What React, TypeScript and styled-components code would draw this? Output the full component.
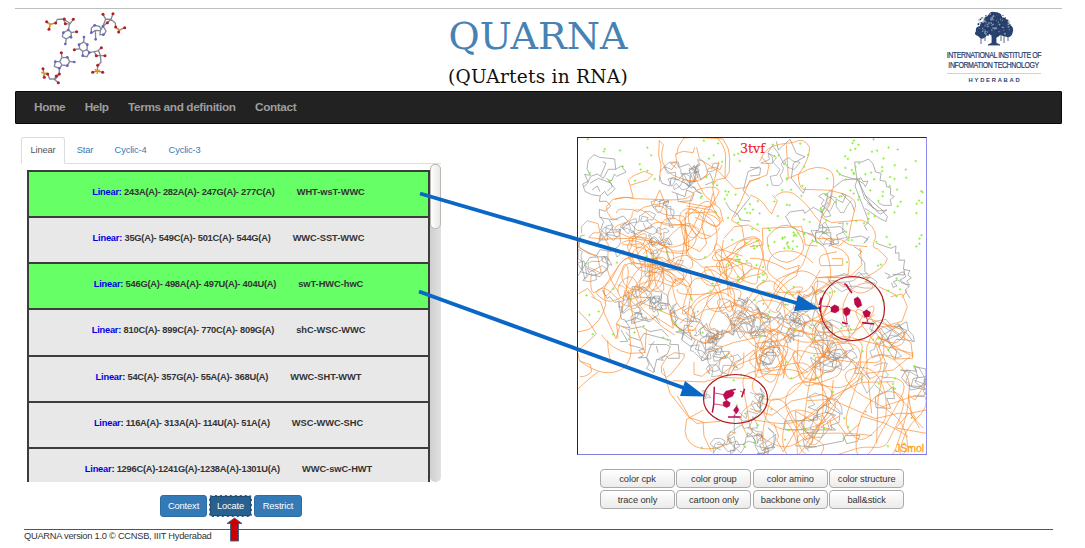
import React from "react";
import styled, { createGlobalStyle } from "styled-components";

const Global = createGlobalStyle`
  *{box-sizing:border-box}
  body{margin:0;background:#fff;font-family:"Liberation Sans",Arial,sans-serif;color:#333;overflow:hidden}
  button{font-family:inherit;margin:0;padding:0}
`;

/* ---------- layout ---------- */
const Page = styled.div`position:relative;width:1085px;height:548px;padding:8px 23px 0 15px;`;
const Header = styled.header`height:83px;border-top:1px solid #bdbdbd;display:grid;grid-template-columns:373px 300px 1fr;`;
const LogoSlot = styled.div`padding:2px 0 0 25px;`;
const TitleBlock = styled.div`display:flex;flex-direction:column;align-items:center;font-family:"DejaVu Serif",serif;`;
const Title = styled.h1`margin:4px 0 0;font-size:38px;line-height:46px;font-weight:400;color:#4682b4;`;
const Subtitle = styled.div`font-size:18.6px;line-height:24px;margin-top:6px;color:#111;white-space:nowrap;letter-spacing:.22px;`;
const Institute = styled.div`justify-self:end;width:136px;padding:2px 0 0;display:flex;flex-direction:column;align-items:center;color:#263f70;white-space:nowrap;`;
const InstLine = styled.div`font-size:8.2px;line-height:10px;letter-spacing:-.5px;-webkit-text-stroke:.2px #263f70;transform:scaleX(.86);&:nth-of-type(1){margin-top:4px;}`;
const InstCity = styled.div`width:94px;margin-top:2px;padding:2px 0 0 2px;border-top:1px solid #cfd5cb;font-size:5.8px;font-weight:700;line-height:9px;letter-spacing:1.75px;text-align:center;`;
const Nav = styled.nav`height:33px;background:#222;border:1px solid #080808;border-radius:1px;display:flex;align-items:center;padding:0 0 1px 18px;gap:19.4px;`;
const NavLink = styled.a`color:#9d9d9d;font-weight:700;font-size:11.8px;line-height:16px;letter-spacing:-.38px;`;
const Main = styled.main`display:flex;height:405px;padding-top:13px;`;
const Left = styled.section`flex:none;width:426px;margin-left:5px;`;
const Tabs = styled.div`width:420px;height:27px;margin-left:1px;border-bottom:1px solid #ddd;display:flex;`;
const Tab = styled.a<{ $active?: boolean; $w: number }>`
  width:${p => p.$w}px;height:27px;display:flex;align-items:center;justify-content:center;padding-bottom:1px;
  font-size:9.3px;letter-spacing:-.16px;color:${p => (p.$active ? "#555" : "#337ab7")};
  border:1px solid ${p => (p.$active ? "#ddd" : "transparent")};border-bottom-color:${p => (p.$active ? "#fff" : "transparent")};
  border-radius:3px 3px 0 0;`;
const Scroller = styled.div`display:flex;height:318px;width:421px;overflow:hidden;`;
const Rows = styled.div`width:403px;margin:6px 0 0 7px;border:2px solid #3a3d3a;border-bottom:0;height:312px;overflow:hidden;`;
const Row = styled.div<{ $on?: boolean }>`
  height:46.15px;border-bottom:2px solid #3a3d3a;background:${p => (p.$on ? "#66ff66" : "#e8e8e8")};
  display:flex;justify-content:center;align-items:flex-start;padding-top:14px;gap:22px;
  font-size:9.3px;line-height:13px;font-weight:700;color:#333;white-space:nowrap;`;
const Bases = styled.span`letter-spacing:-.22px;`;
const Kind = styled.span`color:#0000e6;`;
const Pairing = styled.span`letter-spacing:-.05px;`;
const Track = styled.div`width:11px;height:318px;border-radius:5px;background:linear-gradient(90deg,#cfcfcf,#e2e2e2);`;
const Thumb = styled.div`height:65px;border:1px solid #bcbab6;border-radius:5px;background:linear-gradient(90deg,#fff,#e9e8e6);`;
const Actions = styled.div`display:flex;gap:2px;margin:13px 0 0 140px;`;
const Action = styled.button<{ $w: number; $focus?: boolean }>`
  width:${p => p.$w}px;height:22px;border:1px ${p => (p.$focus ? "dashed #dbe4ec" : "solid #2e6da4")};border-radius:3px;
  background:${p => (p.$focus ? "#286090" : "#337ab7")};color:#fff;font-size:9.3px;letter-spacing:-.12px;
  ${p => p.$focus && "box-shadow:inset 0 0 0 1px #204d74;"}`;
const Right = styled.section`width:350px;margin-left:131px;`;
const Viewer = styled.div`width:350px;height:318px;border:1px solid #1a1a90;border-right-color:#8c8cf0;border-bottom-color:#7d7de0;overflow:hidden;`;
const Controls = styled.div`display:grid;grid-template-columns:repeat(4,75px);gap:2px 1.4px;margin:14px 0 0 23px;`;
const Control = styled.button`height:19px;border:1px solid #aaa;border-radius:4px;background:linear-gradient(#fff,#ecebea);color:#333;font-size:9.3px;letter-spacing:-.08px;`;
const Footer = styled.footer`width:1029px;margin-left:9px;border-top:1px solid #555;font-size:9.3px;line-height:13px;color:#333;letter-spacing:-.26px;`;
const Overlay = styled.svg`position:absolute;left:0;top:0;pointer-events:none;`;

/* ---------- seeded geometry ---------- */
const random = (seed: number) => {
  let s = seed >>> 0;
  return () => {
    s = (s * 1664525 + 1013904223) >>> 0;
    return s / 4294967296;
  };
};

/* A chain that wanders inside an ellipse and turns back near its edge. */
function chain(seed: number, cx: number, cy: number, rx: number, ry: number, n: number, step: number, turn: number, curved: boolean) {
  const r = random(seed);
  for (let i = 0; i < 5; i++) r();
  let x = cx + (r() - 0.5) * rx, y = cy + (r() - 0.5) * ry, a = r() * 6.28, drift = 0;
  const pts: number[][] = [];
  for (let i = 0; i < n; i++) {
    pts.push([x, y]);
    if (curved) { drift = drift * 0.6 + (r() - 0.5) * turn; a += drift; } else a += (r() - 0.5) * turn;
    if (((x - cx) / rx) ** 2 + ((y - cy) / ry) ** 2 > 0.85) {
      const home = Math.atan2(cy - y, cx - x);
      a += Math.atan2(Math.sin(home - a), Math.cos(home - a)) * 0.55;
    }
    const d = step * (0.5 + r());
    x += Math.cos(a) * d;
    y += Math.sin(a) * d;
  }
  const f = (v: number) => v.toFixed(1);
  if (!curved) return "M" + pts.map(p => f(p[0]) + " " + f(p[1])).join("L");
  let out = `M${f(pts[0][0])} ${f(pts[0][1])}`;
  for (let i = 1; i < pts.length - 1; i++)
    out += `Q${f(pts[i][0])} ${f(pts[i][1])} ${f((pts[i][0] + pts[i + 1][0]) / 2)} ${f((pts[i][1] + pts[i + 1][1]) / 2)}`;
  return out;
}

/* centre x, centre y, radius x, radius y, points, step, turn */
const backbone = [
  [655, 235, 42, 28, 62, 10, 1.5], [650, 262, 42, 30, 70, 10, 1.7], [672, 250, 45, 32, 50, 12, 1.2], [692, 205, 34, 26, 24, 13, 1.3],
  [618, 275, 36, 26, 34, 12, 1.3], [650, 280, 50, 20, 40, 13, 1.1], [742, 262, 26, 30, 60, 9, 1.3], [735, 288, 35, 28, 34, 12, 1.3],
  [715, 235, 40, 34, 26, 14, 1.2], [730, 300, 60, 24, 40, 14, 1.3], [785, 312, 60, 24, 60, 12, 1.6], [790, 340, 44, 40, 48, 13, 1.4],
  [810, 275, 36, 26, 24, 14, 1.1], [835, 310, 44, 30, 46, 12, 1.5], [860, 340, 48, 28, 38, 14, 1.2], [820, 385, 72, 44, 40, 22, 1],
  [785, 400, 50, 48, 34, 20, 1.1], [880, 405, 42, 44, 28, 22, 0.9], [730, 335, 45, 34, 26, 14, 1.2], [690, 298, 50, 22, 28, 14, 1.2],
  [770, 432, 55, 20, 20, 17, 1], [770, 355, 17, 21, 28, 12, 0.7], [815, 365, 22, 22, 30, 11, 1.1], [860, 425, 60, 28, 22, 24, 0.8],
];
const sideChains = [
  [640, 222, 20, 12, 60, 5], [662, 212, 18, 12, 40, 5], [662, 234, 20, 12, 60, 4], [612, 240, 14, 14, 32, 6],
  [592, 258, 14, 22, 44, 7], [640, 300, 28, 12, 60, 6], [682, 176, 16, 13, 44, 6], [705, 178, 18, 15, 40, 6],
  [640, 306, 22, 14, 70, 5], [688, 320, 26, 14, 36, 7], [735, 318, 26, 18, 80, 6], [750, 322, 20, 15, 90, 5],
  [780, 330, 26, 14, 100, 5], [712, 345, 24, 16, 60, 6], [706, 335, 12, 10, 60, 4], [716, 362, 20, 12, 36, 7],
  [770, 355, 9, 16, 65, 5], [780, 170, 22, 22, 36, 7], [836, 205, 18, 14, 40, 6], [832, 232, 20, 10, 44, 6],
  [800, 305, 30, 20, 55, 7], [835, 340, 30, 16, 80, 6], [850, 290, 26, 20, 30, 7], [885, 340, 18, 20, 44, 8],
  [835, 358, 22, 12, 60, 6], [870, 375, 20, 16, 20, 8], [745, 432, 20, 16, 60, 6], [760, 440, 16, 12, 44, 6],
  [812, 430, 30, 14, 34, 8], [740, 400, 24, 18, 34, 7], [725, 449, 20, 5, 34, 5], [912, 385, 14, 18, 30, 8],
  [825, 412, 18, 12, 28, 7], [665, 270, 30, 20, 40, 6], [705, 395, 6, 4, 20, 3], [712, 370, 5, 5, 18, 3],
];

const scatter = (() => {
  const r = random(77);
  let d = "";
  const area = (n: number, x: number, y: number, w: number, h: number) => {
    for (let i = 0; i < n; i++) {
      const a = x + r() * w, b = y + r() * h;
      d += `M${a.toFixed(1)} ${b.toFixed(1)}h2.4m-1.2 -1.2v2.4`;
    }
  };
  area(62, 765, 139, 158, 60);
  area(48, 760, 198, 164, 50);
  area(14, 778, 232, 18, 18);
  area(20, 690, 139, 60, 75);
  area(14, 580, 139, 80, 45);
  area(30, 725, 200, 40, 80);
  area(28, 585, 250, 130, 90);
  area(40, 720, 260, 180, 80);
  area(38, 700, 350, 220, 98);
  return d;
})();

/* Long outlying loops, plotted tile by tile at three units to the pixel. */
const tiles = [
  {
    at: [570, 130],
    orange: [
      "M266 30L280 44L275 70L277 95L290 120L308 135L325 142L352 152L386 152L410 135L415 115L436 112L450 119L456 104",
      "M320 74L325 50L342 24L372 22L430 25L459 27L475 57L479 85L478 125L467 144L440 150L428 165",
      "M268 32L266 75L273 105L268 155M374 52L369 68L340 64L317 72L320 96L302 101L320 115",
      "M180 165L175 150L190 137L223 124L248 135L232 150L180 166L190 204L170 202L129 208L110 229L111 245L124 265L145 270",
      "M140 250Q138 238 156 237L190 239L203 246L221 232L250 225L285 218L269 180L250 225M135 208Q160 197 190 206Q240 207 295 210Q348 210 362 198",
      "M35 310L34 290L52 272L84 281L90 308L69 309L56 323L99 327L190 325M33 320Q22 335 28 351L53 370L82 377L94 430L59 413",
      "M23 493L53 475L76 505M94 308L115 344L112 418Q122 455 145 485M380 52L388 86L447 125L495 176L527 173L543 152L570 145M443 26Q461 42 467 74L465 145",
      "M446 95L428 174L436 222L405 235L395 287M370 135L404 196L450 236L460 275M540 150L512 215L484 270L516 290L525 345L500 360",
      "M462 325L493 290L535 285L570 305M460 330L453 382L484 495M545 330L470 383L560 415M570 330L520 350L468 405L475 500",
      "M350 228L425 240L455 268M345 250L440 245M330 215L420 232L428 190M375 262L440 290L458 270M395 287L410 340L390 365L340 340L365 300L395 240",
    ],
    gray: [
      "M55 90L72 74L89 82L134 87L137 118L154 108L168 126L140 139L133 132L126 151L116 153L135 176L122 190L112 197L104 184L90 198L65 194L45 184L38 162L54 154L44 133L61 136L51 116L55 90",
      "M137 118L115 118L100 145L82 132L62 139L52 161L40 171M109 145Q124 153 126 170L112 184M98 95L108 100L92 138M60 160L85 145L120 158M66 180L82 168L90 185",
      "M91 198L88 214L110 214L122 228L105 244L88 238L88 258L101 274L92 300L130 331L144 318M88 262L130 270L160 258L175 275L150 290L165 300M100 325L130 290L118 270",
      "M269 125L297 97L325 96L328 112L355 102L378 125L374 154L356 158L340 132L325 150L303 145L300 168L276 160L268 137M380 105L372 130L385 125L392 150L420 130L430 155L405 165",
      "M467 216L480 238L504 253L510 270L541 273M493 262L540 203L520 182L534 125L569 110M305 185L345 200L350 180L372 190L365 212L325 215L320 190",
      "M23 438L60 382L104 380L116 409L90 440L30 425M45 315L31 318L25 352L78 379L90 359L125 365",
    ],
  },
  {
    at: [750, 130],
    orange: [
      "M29 95Q46 48 89 43L131 37Q162 20 179 52Q178 90 145 135Q145 168 159 178L248 181Q258 137 239 121Q199 101 158 127L115 145L109 43",
      "M34 80L57 105L51 135L0 154M0 195Q35 205 55 241L65 252M75 200Q98 177 130 190Q170 218 194 257L214 280",
      "M248 181L239 225L215 262L245 278L334 270Q377 283 377 323Q360 355 382 356L412 385Q408 413 344 443L202 443M248 183Q318 198 317 225L304 280L296 323L266 348L215 320",
      "M52 322Q90 270 132 292Q165 330 160 358Q148 390 110 397Q50 390 52 322M37 295L155 290L166 345L202 348M37 295L39 345L0 350M0 385Q40 380 110 418L148 406L139 438Q87 465 75 505",
      "M65 252L82 213L67 195M172 310L202 325L272 328L300 345L352 350M244 348Q297 360 298 397L294 435L202 443M245 386L278 386L278 406L212 407Q200 382 220 374L261 365M330 354L336 405L300 440M386 470L438 495",
    ],
    gray: [
      "M260 123L275 136L321 150L314 96L336 96L356 87L369 102L377 126L393 130L390 151L407 154L410 170L422 174L421 194L433 199L421 209L424 226L400 226L385 218",
      "M250 173L280 150L323 146L315 168L351 260L355 278L343 287L351 301M322 149L333 143L339 155L354 153L346 170L341 161L326 152L344 206L390 253L411 240L384 243L352 220",
      "M344 195L396 240L412 260L408 274L390 266L345 235M323 150L352 207L370 235",
      "M0 112L32 114L29 135L0 138M79 34L85 60L96 50L120 28L139 70L165 80L130 100L124 145L160 190L167 172",
      "M109 259L119 246L160 240L164 250L190 232L218 248L207 290M205 294L270 290L286 303L260 315L266 340L244 345L242 306",
      "M304 323L334 318L354 328L342 340L358 318M379 340L423 355L438 348L436 370L447 368L447 391L464 390L460 418L480 422L473 435L484 444L470 453L479 465L458 460L443 450L430 455L441 468L429 472L425 458",
      "M311 349L336 365L325 376L344 398L345 425M428 433L463 435L463 418M106 258L126 292L149 303L190 314M260 208L278 218L288 195L274 190L305 220L314 245",
      "M404 428L420 436L412 445L460 425L468 440L450 450L478 470L465 480L480 505M345 425L360 440L345 455L375 460",
    ],
  },
  {
    at: [570, 290],
    orange: [
      "M24 62L57 96L79 132L22 183L29 213L61 224L65 245Q47 262 30 260M23 126L55 119Q94 95 107 44L102 0M23 298Q60 262 85 246",
      "M64 20L92 35L103 70L138 146L149 109L140 102L144 145M94 134Q125 180 178 190L225 188L229 120M113 151Q114 200 125 213M30 213Q105 270 160 235Q190 204 182 166L178 120L139 101L151 82L165 0",
      "M274 229L275 249L290 262L308 247L342 203L343 192L313 188L292 200L274 229M280 235L300 310L354 379L380 400L450 394",
      "M372 216L372 253L396 259L478 187M400 360L350 388L345 424Q350 467 396 476Q433 480 470 463L480 425L499 430M322 318L359 383L399 396L402 438L424 485",
      "M181 0L219 60L280 113L314 135M175 0L190 87L225 189M245 74L310 115L302 70L349 47M215 38L346 94L385 95L440 140L406 154",
      "M476 187L492 204L470 262L450 260M445 260L552 180L565 230M570 140L490 158L412 187M308 272L402 276L450 262L556 266",
    ],
    gray: [
      "M97 0L112 26L119 20L134 37L146 34L154 87L165 90L180 113L154 110M153 120L173 154L150 155M167 126L180 141L210 151L222 130L302 151L299 163L325 164L328 205L295 205L288 197L274 204L280 211L260 208L251 248L229 235L237 224L229 202L205 204L220 197L207 181L222 177L176 164",
      "M236 163L290 164L301 170L292 192L265 207M259 168L264 188M253 154L242 168L230 202L255 246",
      "M190 20L270 25L265 38L297 42L325 85L311 102L376 151L365 171L335 150L344 105L369 110M362 80L390 89L405 120L435 132L416 158",
      "M165 95L200 85L240 95L255 80L270 100M175 118L215 110L240 125L275 118L295 140M330 100L345 85L370 95L375 65M400 190L420 170L445 180L430 200L470 205",
    ],
  },
  {
    at: [750, 290],
    orange: [
      "M376 156L384 139L456 182L488 199L483 159L393 91M386 139L433 207L488 205L488 186M380 156L406 214L384 327L380 460",
      "M0 388L72 399Q180 412 244 319L334 277L433 275M0 356L66 376L125 333L215 314L275 342L376 386L445 370L480 370L528 360M410 275L440 313L478 355L498 386M478 369L520 415M477 369L438 414L529 430M332 378L402 399L452 425L474 440",
      "M140 0Q200 76 268 119L312 180M148 0L143 76Q125 110 100 149L17 160Q15 210 37 251L93 255L137 183M37 160L64 145L108 210L100 265M37 190Q52 160 79 192L104 255",
      "M145 147L141 222L164 265L196 271L196 203L231 198",
      "M72 400L86 438L80 450L100 485M210 417L189 393L136 363L143 459M206 417L174 475M267 379L212 411L246 419L240 390M245 375L290 435L330 400",
      "M422 20L456 12L472 50L456 94L410 107M456 23L472 0M530 275L495 330L475 315L485 375L509 415",
      "M240 160L330 150L430 175L486 190M200 120L260 150L300 210L355 270L365 370M250 270L244 319L150 400L100 485M480 200L430 240L350 250L250 330",
    ],
    gray: [
      "M387 173L399 134L470 95L475 121L490 137L493 155L472 150L440 148L415 179M382 120L440 185L434 210M410 107L456 146L467 126L488 153",
      "M455 263L468 240L500 244L494 230L528 237L528 265L515 290L474 287L455 263M530 205L529 260L490 265L483 290L530 300L520 320L489 318",
      "M104 417L105 393L202 390L203 360L225 345L270 371L267 397L240 407L257 420L105 419M135 467L200 471M177 484L169 475L280 453L285 437L330 436L322 454L290 461L278 431",
      "M375 285L400 309L376 321L378 353L422 355L410 325L433 326L430 290L403 309M201 150L249 153L260 170L250 202L289 204L288 180M310 175L285 198L314 214",
    ],
  },
];

function Molecule() {
  return (
    <svg width="348" height="316" viewBox="578 138 348 316" fill="none">
      <g stroke="#858585" strokeWidth=".55" strokeLinejoin="bevel">
        {sideChains.map((c, i) => <path key={i} d={chain(i * 173 + 91, c[0], c[1], c[2], c[3], c[4] * 0.85, c[5], 3.8, false)} />)}
      </g>
      {tiles.map((t, i) => (
        <g key={i} transform={`translate(${t.at[0]} ${t.at[1]}) scale(.33333)`} strokeWidth="2" strokeLinejoin="round">
          {t.gray.map((d, k) => <path key={k} d={d} stroke="#8c8c8c" />)}
        </g>
      ))}
      <g stroke="#fa8a2c" strokeWidth=".65">
        {backbone.map((c, i) => <path key={i} d={chain(i * 311 + 17, c[0], c[1], c[2], c[3], c[4], c[5], c[6], true)} />)}
      </g>
      {tiles.map((t, i) => (
        <g key={i} transform={`translate(${t.at[0]} ${t.at[1]}) scale(.33333)`} strokeWidth="2.1" strokeLinejoin="round">
          {t.orange.map((d, k) => <path key={k} d={d} stroke="#fa8c30" />)}
        </g>
      ))}
      <path d={scatter} stroke="#80f02c" strokeWidth=".8" />
      <g transform="translate(570 290) scale(.33333)" stroke="#bd0a50" fill="#bd0a50">
        <path d="M434 309L462 314M433 342L462 346M493 380L496 368M510 303L525 310M471 318L469 341" strokeWidth="2.2" fill="none" />
        <path d="M433 290L431 345L427 368M474 381H512M524 296L515 322M478 303L497 298" strokeWidth="4.5" fill="none" />
        <path d="M459 314L468 303L485 299L493 308L488 319L476 324L466 330ZM459 337L470 331L481 338L479 348L470 353L460 348ZM490 361L500 347L507 360L499 372Z" />
      </g>
      <g transform="translate(750 290) scale(.33333)" stroke="#b80b48" fill="#b80b48">
        <path d="M237 48L247 58M288 75L291 100M349 80L354 98M214 48L240 50" strokeWidth="2.2" fill="none" />
        <path d="M283 -19L290 -15L296 -4L306 9M276 97L293 102M336 98L372 102M208 45L214 23M207 50L212 66" strokeWidth="5" fill="none" />
        <path d="M243 52L254 44L266 50L267 62L256 69L243 65ZM280 58L291 51L302 60L298 73L288 79L280 69ZM312 27L323 20L331 29L336 46L323 54L314 43ZM338 66L350 59L362 67L358 80L344 82Z" />
      </g>
      <text x="740" y="153" fill="#ee1c1c" stroke="#ee1c1c" strokeWidth=".15" fontFamily="DejaVu Serif, serif" fontSize="12.6">3tvf</text>
      <text x="895" y="452" fill="#ffa21c" stroke="#ffa21c" strokeWidth=".3" fontFamily="Liberation Sans, sans-serif" fontSize="10.5">JSmol</text>
    </svg>
  );
}

/* ---------- header drawings ---------- */
const bonds = [
  "M140 65L150 73L147 88M150 73L167 69L172 58L190 57L196 70L209 73L220 58M190 57L209 69L205 90M205 90L190 98L187 110L199 117L214 107L213 96L205 90M213 98L230 95M199 117L196 132",
  "M309 43L317 57L333 58L339 41M317 57L309 78L322 68L333 58L346 69L347 81L358 90L374 83M358 90L356 96M309 78L301 92L286 91L274 99L274 84L284 76L299 80L304 90M301 92L300 104L313 103L318 93L309 78M286 91L287 118",
  "M252 111L251 126L237 134L239 146L223 149M251 126L262 134L261 149L248 154L239 146M261 149L268 158L261 170L248 168L248 154M268 158L283 155L293 153L304 143M283 155L289 168L301 166L296 153M301 166L315 167M301 166L303 187L293 197L292 213L278 217M292 213L308 217",
  "M184 158L186 173L202 172L209 184L223 186M209 184L202 197L186 195L179 184L186 173M179 184L166 185L163 199L178 205L186 195M178 205L178 222L168 228L163 238L175 248M178 222L166 237L149 237L143 222L132 221L129 206M132 221L133 232",
];
const oxygens = [[140,65],[147,88],[167,69],[193,57],[196,71],[220,58],[230,95],[309,43],[339,41],[322,68],[347,81],[374,83],[356,96],[223,149],[304,143],[289,167],[315,167],[293,196],[278,217],[308,217],[184,158],[129,206],[133,232],[143,222],[178,222],[169,228],[175,248]];
const nitrogens = [[205,90],[190,98],[213,112],[196,132],[274,98],[284,76],[309,79],[310,104],[287,118],[252,111],[237,134],[262,134],[248,167],[268,158],[202,172],[223,186],[202,197],[166,185],[178,205]];

const MoleculeLogo = () => (
  <svg width="90" height="75" viewBox="120 33 270 225" fill="none">
    <g stroke="#858796" strokeWidth="4">{bonds.map((d, i) => <path key={i} d={d} />)}</g>
    {[[150, 73], [358, 90], [292, 213], [132, 221]].map(([x, y], i) => <path key={i} d={`M${x - 8} ${y - 5}L${x} ${y}L${x + 8} ${y - 2}M${x} ${y}v9`} stroke="#e39a21" strokeWidth="4.5" />)}
    {nitrogens.map(([x, y], i) => <circle key={i} cx={x} cy={y} r="4" fill="#6262c7" />)}
    {oxygens.map(([x, y], i) => <circle key={i} cx={x} cy={y} r="4.6" fill="#b21f22" />)}
  </svg>
);

const leaves = (() => {
  const r = random(9);
  return Array.from({ length: 190 }, () => {
    const a = r() * 6.28, q = Math.sqrt(r());
    return [20 + Math.cos(a) * q * 17, 14 + Math.sin(a) * q * 11.5, 0.5 + r() * 0.8, r()];
  });
})();
const Tree = () => (
  <svg width="40" height="36" viewBox="0 0 40 36">
    <path d="M10 11Q9 6 14 5Q16 0 20 1Q27 1 28 6Q34 7 34 13Q40 15 39 20Q38 27 33 26L26 24L22 27L15 23L10 27Q7 29 4 25Q-1 24 2 20Q1 16 6 15Q6 11 10 11" fill="#29426e" />
    {leaves.map(([x, y, s, c], i) => <circle key={i} cx={x} cy={y} r={s * 0.75} fill={c < 0.42 ? "#8b9bb4" : "#203a68"} />)}
    <path d="M18 22L18 32L14 34H26L22 32L22 21M7 22V33M11 24V30M30 24V32M34 23V30M27 23V30" fill="#29426e" stroke="#29426e" strokeWidth=".8" />
  </svg>
);

/* ---------- content ---------- */
const quartets = [
  { bases: "243A(A)- 282A(A)- 247G(A)- 277C(A)", type: "WHT-wsT-WWC", on: true },
  { bases: "35G(A)- 549C(A)- 501C(A)- 544G(A)", type: "WWC-SST-WWC" },
  { bases: "546G(A)- 498A(A)- 497U(A)- 404U(A)", type: "swT-HWC-hwC", on: true },
  { bases: "810C(A)- 899C(A)- 770C(A)- 809G(A)", type: "shC-WSC-WWC" },
  { bases: "54C(A)- 357G(A)- 55A(A)- 368U(A)", type: "WWC-SHT-WWT" },
  { bases: "116A(A)- 313A(A)- 114U(A)- 51A(A)", type: "WSC-WWC-SHC" },
  { bases: "1296C(A)-1241G(A)-1238A(A)-1301U(A)", type: "WWC-swC-HWT" },
];
const controls = ["color cpk", "color group", "color amino", "color structure", "trace only", "cartoon only", "backbone only", "ball&stick"];

export default function App() {
  return (
    <Page>
      <Global />
      <Header>
        <LogoSlot><MoleculeLogo /></LogoSlot>
        <TitleBlock><Title>QUARNA</Title><Subtitle>(QUArtets in RNA)</Subtitle></TitleBlock>
        <Institute>
          <Tree />
          <InstLine>INTERNATIONAL INSTITUTE OF</InstLine>
          <InstLine>INFORMATION TECHNOLOGY</InstLine>
          <InstCity>HYDERABAD</InstCity>
        </Institute>
      </Header>
      <Nav>{["Home", "Help", "Terms and definition", "Contact"].map(t => <NavLink key={t}>{t}</NavLink>)}</Nav>
      <Main>
        <Left>
          <Tabs>
            <Tab $active $w={44}>Linear</Tab><Tab $w={40}>Star</Tab><Tab $w={51}>Cyclic-4</Tab><Tab $w={57}>Cyclic-3</Tab>
          </Tabs>
          <Scroller>
            <Rows>
              {quartets.map(q => (
                <Row key={q.bases} $on={q.on}>
                  <Bases><Kind>Linear:</Kind> {q.bases}</Bases><Pairing>{q.type}</Pairing>
                </Row>
              ))}
            </Rows>
            <Track><Thumb /></Track>
          </Scroller>
          <Actions><Action $w={47}>Context</Action><Action $w={43} $focus>Locate</Action><Action $w={48}>Restrict</Action></Actions>
        </Left>
        <Right>
          <Viewer><Molecule /></Viewer>
          <Controls>{controls.map(c => <Control key={c}>{c}</Control>)}</Controls>
        </Right>
      </Main>
      <Footer>QUARNA version 1.0 © CCNSB, IIIT Hyderabad</Footer>
      <Overlay width="1085" height="548" fill="none">
        <path d="M420 193.5L800 304M419 291.5L684 388" stroke="#0b67c5" strokeWidth="3.9" />
        <path d="M820 309L798 295L794 311ZM705.5 396.5L685 381L680 396Z" fill="#0b67c5" />
        <ellipse cx="852.5" cy="308.5" rx="32" ry="32" stroke="#b5161b" strokeWidth="1.2" />
        <ellipse cx="735.5" cy="399" rx="32" ry="24.5" stroke="#b5161b" strokeWidth="1.2" />
        <path d="M234.5 518L242 523.5H238.5V541H230.5V523.5H227Z" fill="#cc0000" stroke="#385d8a" strokeWidth=".9" />
      </Overlay>
    </Page>
  );
}
